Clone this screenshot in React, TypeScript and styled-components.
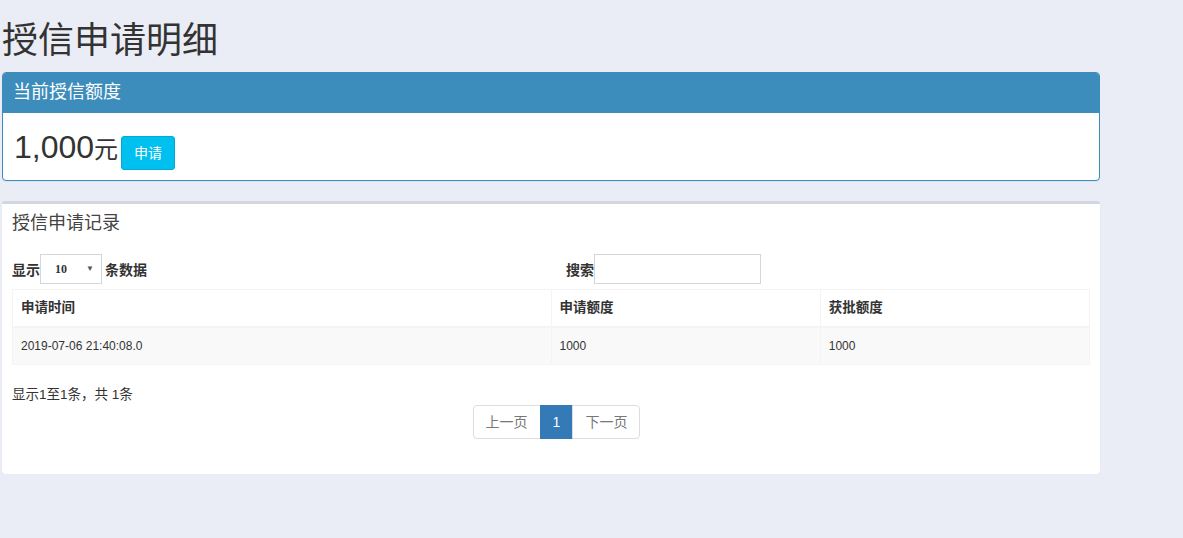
import styled, { createGlobalStyle } from "styled-components"

const GlobalStyle = createGlobalStyle`
    html, body {
        margin: 0;
        padding: 0;
        background: #eaedf5;
        font-family: "Liberation Sans", "Noto Sans CJK SC", sans-serif;
        color: #333;
    }
`

const Page = styled.div`
    width: 1098px;
    padding: 0 2px;
`

const Title = styled.h1`
    font-size: 36px;
    font-weight: 400;
    line-height: 1.1;
    margin: 21px 0 11px;
    color: #333;
`

const Panel = styled.div`
    background: #fff;
    border: 1px solid #3c8dbc;
    border-radius: 4px;
    overflow: hidden;
    box-shadow: 0 1px 1px rgba(0,0,0,0.05);
`

const PanelHeading = styled.div`
    background: #3c8dbc;
    color: #fff;
    font-size: 18px;
    line-height: 20px;
    padding: 9px 10px 11px;
`

const PanelBody = styled.div`
    display: flex;
    align-items: baseline;
    padding: 18px 11px 10px;
`

const Amount = styled.span`
    font-size: 32px;
    line-height: 1;
`

const Unit = styled.span`
    font-size: 24px;
    line-height: 1;
    margin-right: 3px;
`

const Button = styled.button`
    font-family: inherit;
    font-size: 14px;
    line-height: 20px;
    padding: 6px 12px;
    color: #fff;
    background: #00c0ef;
    border: 1px solid #00acd6;
    border-radius: 3px;
    cursor: pointer;
`

const Box = styled.div`
    margin-top: 20px;
    background: #fff;
    border-top: 3px solid #d2d6de;
    border-radius: 3px;
    box-shadow: 0 1px 1px rgba(0,0,0,0.1);
`

const BoxHeader = styled.div`
    padding: 10px;
`

const BoxTitle = styled.h3`
    margin: 0;
    font-size: 18px;
    font-weight: 400;
    line-height: 1;
    color: #444;
`

const BoxBody = styled.div`
    padding: 10px 10px 35px;
`

const Controls = styled.div`
    display: grid;
    grid-template-columns: 539px 1fr;
    align-items: center;
    font-size: 14px;
    font-weight: 700;
    margin-top: 2px;
`

const ControlLeft = styled.label`
    display: flex;
    align-items: center;
`

const ControlRight = styled.label`
    display: flex;
    align-items: center;
    padding-left: 15px;
`

const SelectWrap = styled.span`
    position: relative;
    display: inline-block;
    margin: 0 3px 0 0;
`

const Select = styled.select`
    appearance: none;
    width: 62px;
    height: 30px;
    padding: 0 0 0 14px;
    border: 1px solid #d2d6de;
    background: #fff;
    font-family: "Liberation Serif", serif;
    font-weight: 700;
    font-size: 12px;
    color: #333;
    outline: none;
`

const Arrow = styled.span`
    position: absolute;
    right: 8px;
    top: 10px;
    font-size: 8px;
    color: #555;
    pointer-events: none;
`

const SearchInput = styled.input`
    width: 167px;
    height: 30px;
    box-sizing: border-box;
    border: 1px solid #d2d6de;
    outline: none;
    padding: 0 6px;
`

const Table = styled.table`
    width: 100%;
    border-collapse: collapse;
    margin: 5px 0 13px;
    border: 1px solid #f4f4f4;
`

const Th = styled.th<{ $w?: string }>`
    width: ${p => p.$w || "auto"};
    text-align: left;
    font-size: 13.5px;
    font-weight: 700;
    line-height: 20px;
    padding: 8px;
    border: 1px solid #f4f4f4;
    border-bottom-width: 2px;
`

const Tr = styled.tr<{ $striped?: boolean }>`
    background: ${p => p.$striped ? "#f9f9f9" : "#fff"};
`

const Td = styled.td`
    font-size: 12px;
    line-height: 20px;
    padding: 8px;
    border: 1px solid #f4f4f4;
`

const Info = styled.div`
    font-size: 13.5px;
    line-height: 18px;
    padding-top: 8px;
`

const Pager = styled.ul`
    display: flex;
    justify-content: center;
    list-style: none;
    margin: 1px 0 0;
    padding: 0 0 0 12px;
`

const PageItem = styled.li<{ $active?: boolean }>`
    font-size: 14px;
    line-height: 20px;
    padding: 6px 12px;
    border: 1px solid ${p => p.$active ? "#337ab7" : "#ddd"};
    margin-left: -1px;
    background: ${p => p.$active ? "#337ab7" : "#fff"};
    color: ${p => p.$active ? "#fff" : "#777"};
    &:first-child {
        border-radius: 4px 0 0 4px;
    }
    &:last-child {
        border-radius: 0 4px 4px 0;
    }
`

const rows = [
    { time: "2019-07-06 21:40:08.0", apply: "1000", approved: "1000" },
]

export default function App() {
    return (
        <Page>
            <GlobalStyle />
            <Title>授信申请明细</Title>
            <Panel>
                <PanelHeading>当前授信额度</PanelHeading>
                <PanelBody>
                    <Amount>1,000</Amount>
                    <Unit>元</Unit>
                    <Button>申请</Button>
                </PanelBody>
            </Panel>
            <Box>
                <BoxHeader>
                    <BoxTitle>授信申请记录</BoxTitle>
                </BoxHeader>
                <BoxBody>
                    <Controls>
                        <ControlLeft>
                            显示
                            <SelectWrap>
                                <Select defaultValue="10">
                                    <option value="10">10</option>
                                    <option value="25">25</option>
                                    <option value="50">50</option>
                                </Select>
                                <Arrow>▼</Arrow>
                            </SelectWrap>
                            条数据
                        </ControlLeft>
                        <ControlRight>
                            搜索<SearchInput />
                        </ControlRight>
                    </Controls>
                    <Table>
                        <thead>
                            <Tr>
                                <Th $w="50%">申请时间</Th>
                                <Th $w="25%">申请额度</Th>
                                <Th $w="25%">获批额度</Th>
                            </Tr>
                        </thead>
                        <tbody>
                            {rows.map((r, i) => (
                                <Tr key={i} $striped={i % 2 === 0}>
                                    <Td>{r.time}</Td>
                                    <Td>{r.apply}</Td>
                                    <Td>{r.approved}</Td>
                                </Tr>
                            ))}
                        </tbody>
                    </Table>
                    <Info>显示1至1条，共 1条</Info>
                    <Pager>
                        <PageItem>上一页</PageItem>
                        <PageItem $active>1</PageItem>
                        <PageItem>下一页</PageItem>
                    </Pager>
                </BoxBody>
            </Box>
        </Page>
    )
}
